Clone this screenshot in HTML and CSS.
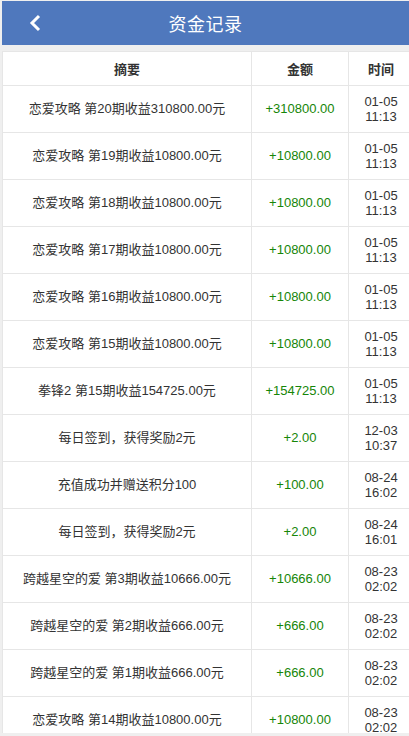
FILE: index.html
```html
<!DOCTYPE html>
<html lang="zh-CN">
<head>
  <meta charset="UTF-8">
  <meta name="viewport" content="width=device-width, initial-scale=1.0">
  <title>资金记录</title>
  <link rel="stylesheet" href="styles.css">
</head>
<body>
  <div class="screen">
    <header class="topbar">
      <a class="back" href="#">
        <svg width="14" height="18" viewBox="0 0 14 18"><path d="M11 2 L4 9 L11 16" fill="none" stroke="#fff" stroke-width="3"/></svg>
      </a>
      <h1>资金记录</h1>
    </header>

    <div class="records">
      <table class="log">
        <colgroup>
          <col class="c-desc">
          <col class="c-amt">
          <col class="c-time">
        </colgroup>
        <thead>
          <tr><th>摘要</th><th>金额</th><th>时间</th></tr>
        </thead>
        <tbody>
          <tr><td>恋爱攻略 第20期收益310800.00元</td><td class="amt">+310800.00</td><td class="time">01-05<br>11:13</td></tr>
          <tr><td>恋爱攻略 第19期收益10800.00元</td><td class="amt">+10800.00</td><td class="time">01-05<br>11:13</td></tr>
          <tr><td>恋爱攻略 第18期收益10800.00元</td><td class="amt">+10800.00</td><td class="time">01-05<br>11:13</td></tr>
          <tr><td>恋爱攻略 第17期收益10800.00元</td><td class="amt">+10800.00</td><td class="time">01-05<br>11:13</td></tr>
          <tr><td>恋爱攻略 第16期收益10800.00元</td><td class="amt">+10800.00</td><td class="time">01-05<br>11:13</td></tr>
          <tr><td>恋爱攻略 第15期收益10800.00元</td><td class="amt">+10800.00</td><td class="time">01-05<br>11:13</td></tr>
          <tr><td>拳锋2 第15期收益154725.00元</td><td class="amt">+154725.00</td><td class="time">01-05<br>11:13</td></tr>
          <tr><td>每日签到，获得奖励2元</td><td class="amt">+2.00</td><td class="time">12-03<br>10:37</td></tr>
          <tr><td>充值成功并赠送积分100</td><td class="amt">+100.00</td><td class="time">08-24<br>16:02</td></tr>
          <tr><td>每日签到，获得奖励2元</td><td class="amt">+2.00</td><td class="time">08-24<br>16:01</td></tr>
          <tr><td>跨越星空的爱 第3期收益10666.00元</td><td class="amt">+10666.00</td><td class="time">08-23<br>02:02</td></tr>
          <tr><td>跨越星空的爱 第2期收益666.00元</td><td class="amt">+666.00</td><td class="time">08-23<br>02:02</td></tr>
          <tr><td>跨越星空的爱 第1期收益666.00元</td><td class="amt">+666.00</td><td class="time">08-23<br>02:02</td></tr>
          <tr><td>恋爱攻略 第14期收益10800.00元</td><td class="amt">+10800.00</td><td class="time">08-23<br>02:02</td></tr>
        </tbody>
      </table>
    </div>
  </div>
</body>
</html>
```

FILE: styles.css
```css
:root {
  --bg: #efefef;
  --blue: #4f78bd;
  --line: #e6e6e6;
  --text: #333333;
  --green: #168608;
  --font: 'Liberation Sans', 'Noto Sans CJK SC', sans-serif;
}

html, body {
  height: 100%;
}

body {
  margin: 0;
  padding: 1px 0 0 2px;
  box-sizing: border-box;
  background: var(--bg);
  font-family: var(--font);
  color: var(--text);
  overflow: hidden;
}

.screen {
  height: 732px;
  overflow: hidden;
}

.topbar {
  height: 44px;
  background: var(--blue);
  display: flex;
  align-items: center;
  justify-content: center;
  position: relative;
}

.topbar h1 {
  margin: 0;
  color: #fff;
  font-size: 18px;
  font-weight: normal;
  letter-spacing: 0.5px;
}

.back {
  position: absolute;
  left: 26px;
  top: 13px;
  display: block;
  line-height: 0;
}

.records {
  margin-top: 6px;
  width: 410px;
  overflow: hidden;
}

.log {
  width: 411px;
  border-collapse: collapse;
  table-layout: fixed;
  background: #fff;
  font-size: 13px;
}

.c-desc { width: 249px; }
.c-amt { width: 97px; }
.c-time { width: 65px; }

.log th,
.log td {
  border: 1px solid var(--line);
  text-align: center;
  padding: 0;
}

.log th {
  height: 33px;
  font-weight: bold;
  font-size: 13px;
}

.log td {
  height: 46px;
  line-height: 16px;
}

.log .amt {
  color: var(--green);
}

.log .time {
  line-height: 15px;
}
```
